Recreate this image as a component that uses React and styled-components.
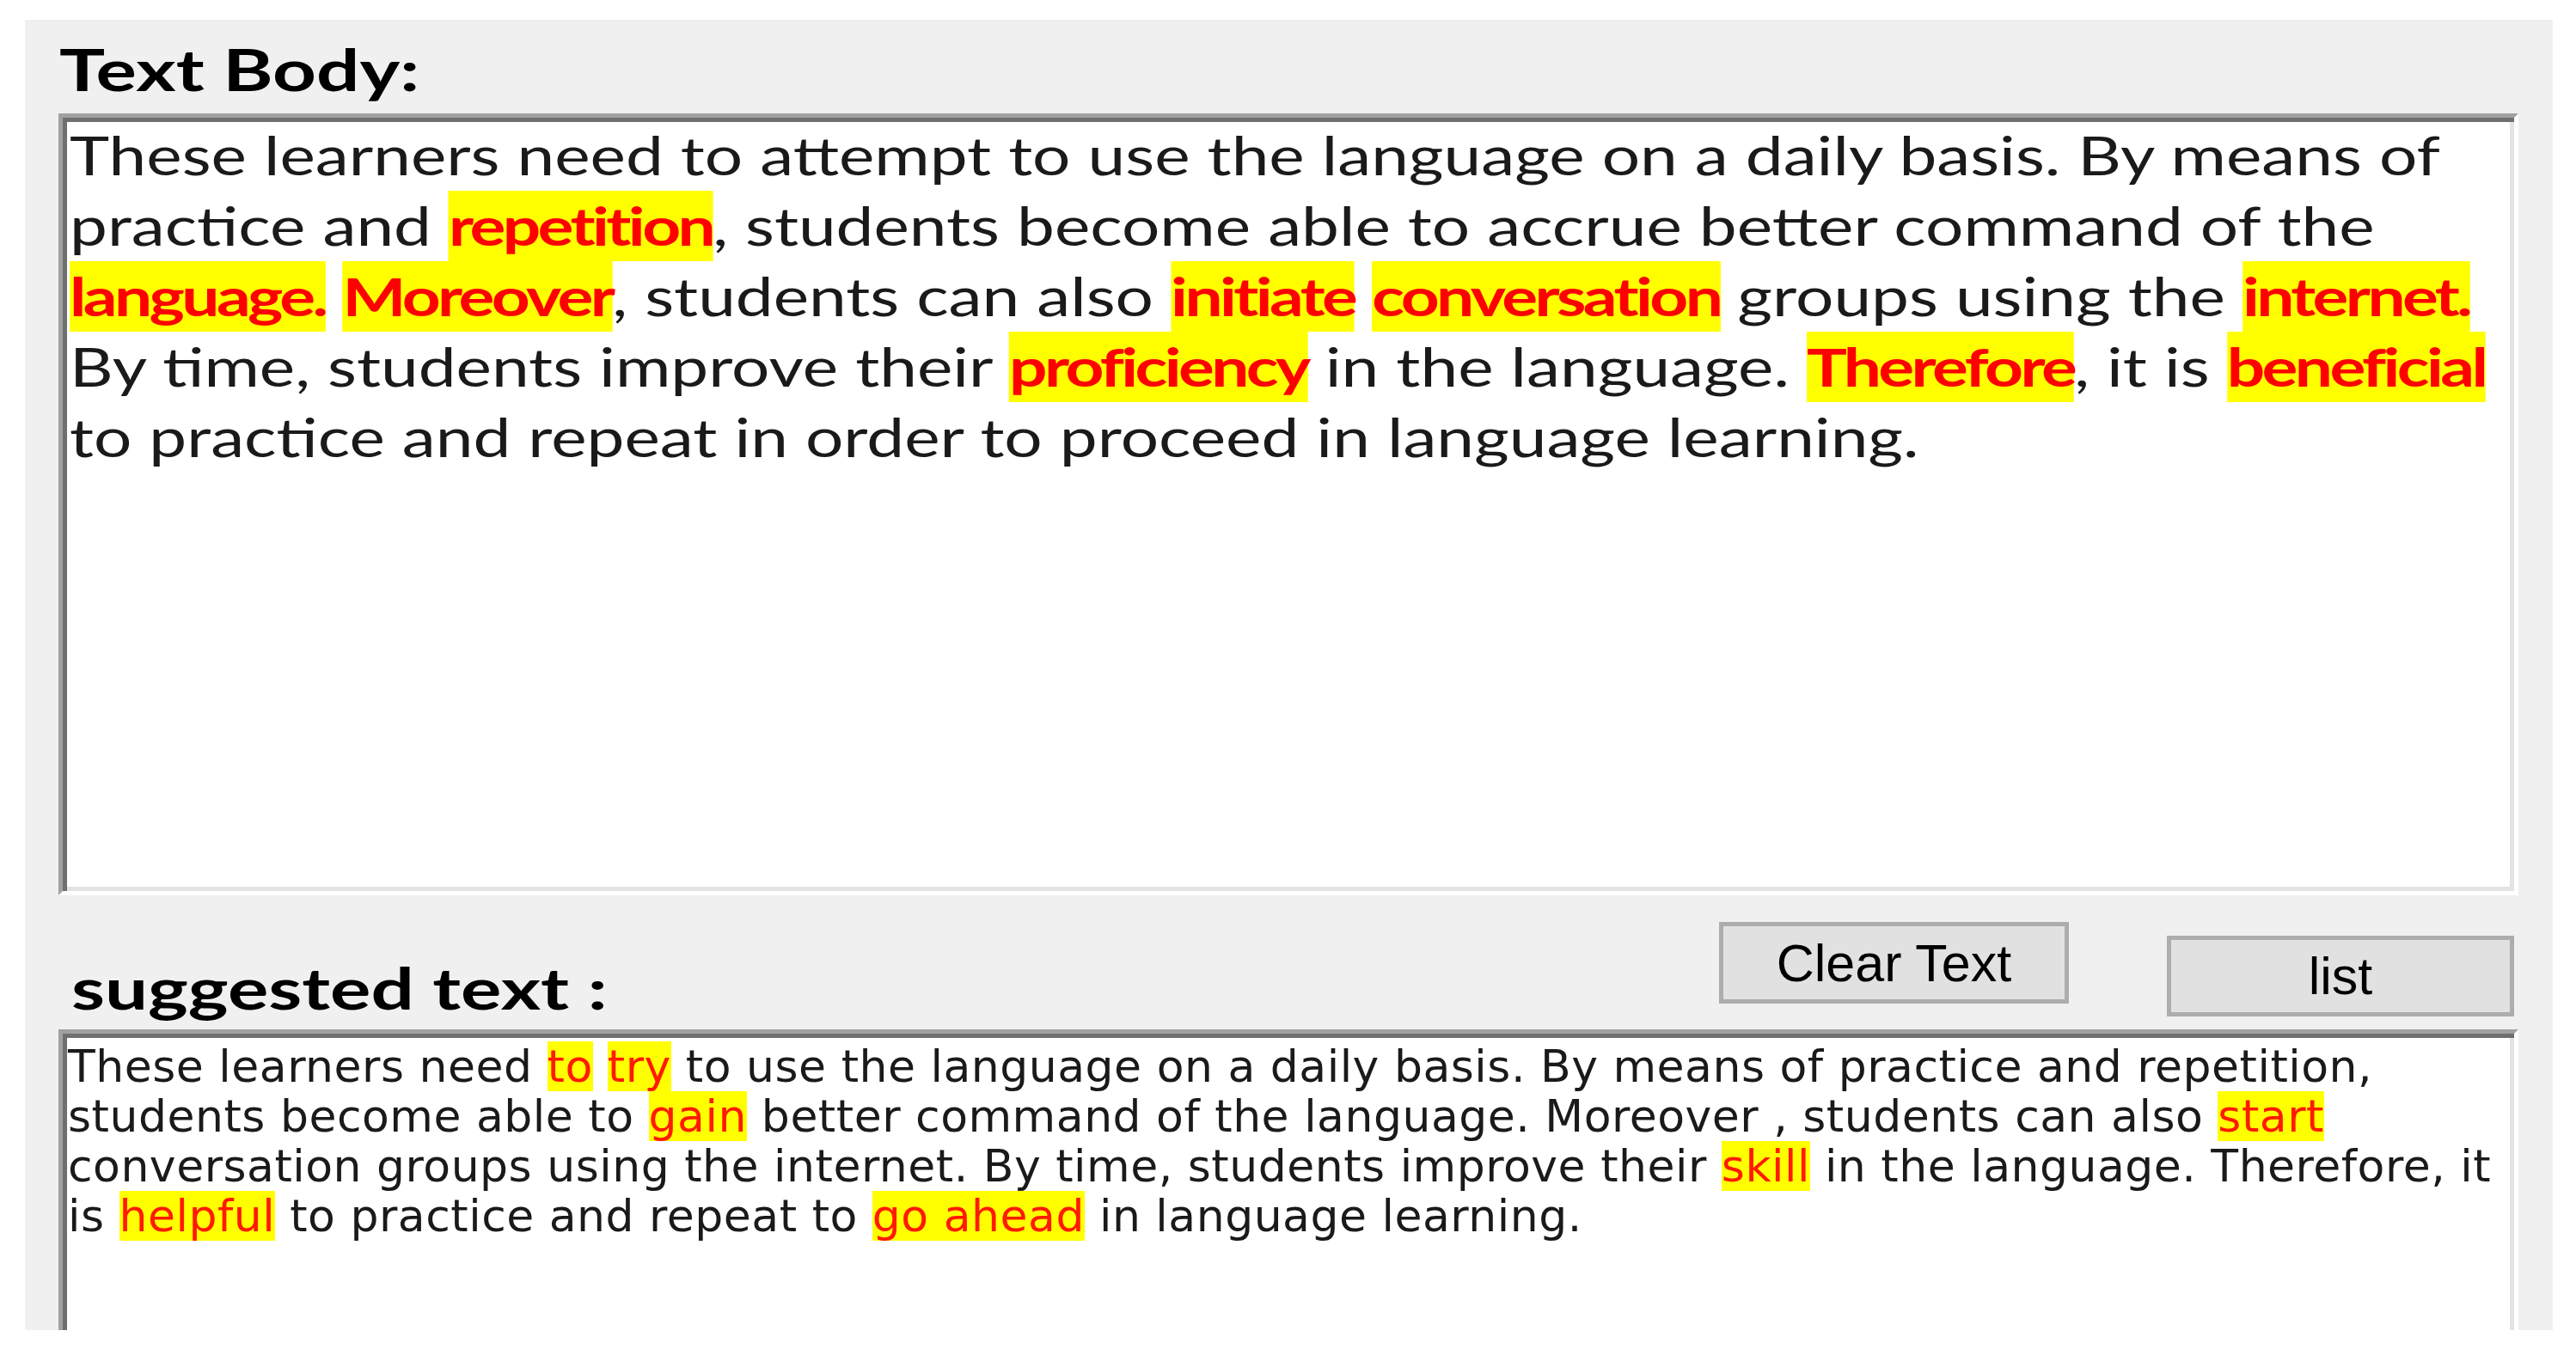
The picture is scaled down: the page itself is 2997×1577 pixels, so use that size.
import React from 'react';
import styled, { createGlobalStyle } from 'styled-components';

const GlobalStyle = createGlobalStyle`
  html, body { margin: 0; padding: 0; background: #ffffff; }
  body { width: 2997px; height: 1577px; overflow: hidden; }
`;

const Page = styled.div`
  padding: 23px 0 0 29px;
`;

const Window = styled.div`
  width: 2941px;
  height: 1525px;
  box-sizing: border-box;
  padding: 0 40px 0 39px;
  background: #f0f0f0;
  overflow: hidden;
  display: flex;
  flex-direction: column;
`;

const HeadRow = styled.div`
  height: ${p => p.$height}px;
  flex: none;
  display: flex;
  align-items: flex-start;
`;

// the screenshot is stretched sideways, so the labels get a scaleX
const Heading = styled.div`
  font-family: Lato, sans-serif;
  font-weight: 700;
  font-size: 66px;
  line-height: 66px;
  color: #000;
  margin: ${p => p.$top}px 0 0 ${p => p.$indent}px;
  white-space: nowrap;
  transform: scaleX(1.345);
  transform-origin: 0 0;
`;

const TextBox = styled.div`
  flex: none;
  box-sizing: border-box;
  height: ${p => p.$height}px;
  background: #fff;
  border: 5px solid;
  border-color: #a0a0a0 #ffffff #ffffff #a0a0a0;
  box-shadow: inset 5px 5px 0 #6f6f6f, inset -5px -5px 0 #e3e3e3;
  padding: ${p => p.$pad};
`;

const Stretch = styled.div`
  width: max-content;
  transform: scaleX(${p => p.$x});
  transform-origin: 0 0;
`;

const BodyLine = styled.div`
  font-family: Lato, sans-serif;
  font-size: 61px;
  line-height: 82px;
  height: 82px;
  color: #1a1a1a;
  white-space: pre;
`;

const Mark = styled.span`
  display: inline-block;
  vertical-align: top;
  height: 82px;
  line-height: 82px;
  background: #ffff00;
  color: #ff0000;
  font-weight: 700;
  letter-spacing: -2.8px;
`;

const SuggestLine = styled.div`
  font-family: "DejaVu Sans", sans-serif;
  font-size: 52px;
  letter-spacing: 0.5px;
  line-height: 58px;
  height: 58px;
  color: #1a1a1a;
  white-space: pre;
`;

const SoftMark = styled.span`
  display: inline-block;
  vertical-align: top;
  height: 58px;
  line-height: 58px;
  background: #ffff00;
  color: #ff1a00;
`;

const Buttons = styled.div`
  margin-left: auto;
  display: flex;
  align-items: flex-start;
  gap: 114px;
  padding-right: 5px;
`;

const Button = styled.button`
  box-sizing: border-box;
  width: ${p => p.$width}px;
  height: ${p => p.$height}px;
  margin-top: ${p => p.$top}px;
  padding: 0;
  background: #e1e1e1;
  border: 5px solid #adadad;
  font-family: "Liberation Sans", sans-serif;
  font-size: 61px;
  color: #000;
`;

export default function App() {
  return (
    <Page>
      <GlobalStyle />
      <Window>
        <HeadRow $height={109}>
          <Heading $top={25} $indent={1}>Text Body:</Heading>
        </HeadRow>
        <TextBox $height={910} $pad="3px 8px">
          <Stretch $x={1.284}>
            <BodyLine>These learners need to attempt to use the language on a daily basis. By means of</BodyLine>
            <BodyLine>practice and <Mark>repetition</Mark>, students become able to accrue better command of the</BodyLine>
            <BodyLine><Mark>language.</Mark> <Mark>Moreover</Mark>, students can also <Mark>initiate</Mark> <Mark>conversation</Mark> groups using the <Mark>internet.</Mark></BodyLine>
            <BodyLine>By time, students improve their <Mark>proficiency</Mark> in the language. <Mark>Therefore</Mark>, it is <Mark>beneficial</Mark></BodyLine>
            <BodyLine>to practice and repeat in order to proceed in language learning.</BodyLine>
          </Stretch>
        </TextBox>
        <HeadRow $height={156}>
          <Heading $top={75} $indent={15}>suggested text :</Heading>
          <Buttons>
            <Button $width={407} $height={95} $top={31}>Clear Text</Button>
            <Button $width={404} $height={94} $top={47}>list</Button>
          </Buttons>
        </HeadRow>
        <TextBox $height={420} $pad="9px 6px">
          <SuggestLine>These learners need <SoftMark>to</SoftMark> <SoftMark>try</SoftMark> to use the language on a daily basis. By means of practice and repetition,</SuggestLine>
          <SuggestLine>students become able to <SoftMark>gain</SoftMark> better command of the language. Moreover , students can also <SoftMark>start</SoftMark></SuggestLine>
          <SuggestLine>conversation groups using the internet. By time, students improve their <SoftMark>skill</SoftMark> in the language. Therefore, it</SuggestLine>
          <SuggestLine>is <SoftMark>helpful</SoftMark> to practice and repeat to <SoftMark>go ahead</SoftMark> in language learning.</SuggestLine>
        </TextBox>
      </Window>
    </Page>
  );
}
